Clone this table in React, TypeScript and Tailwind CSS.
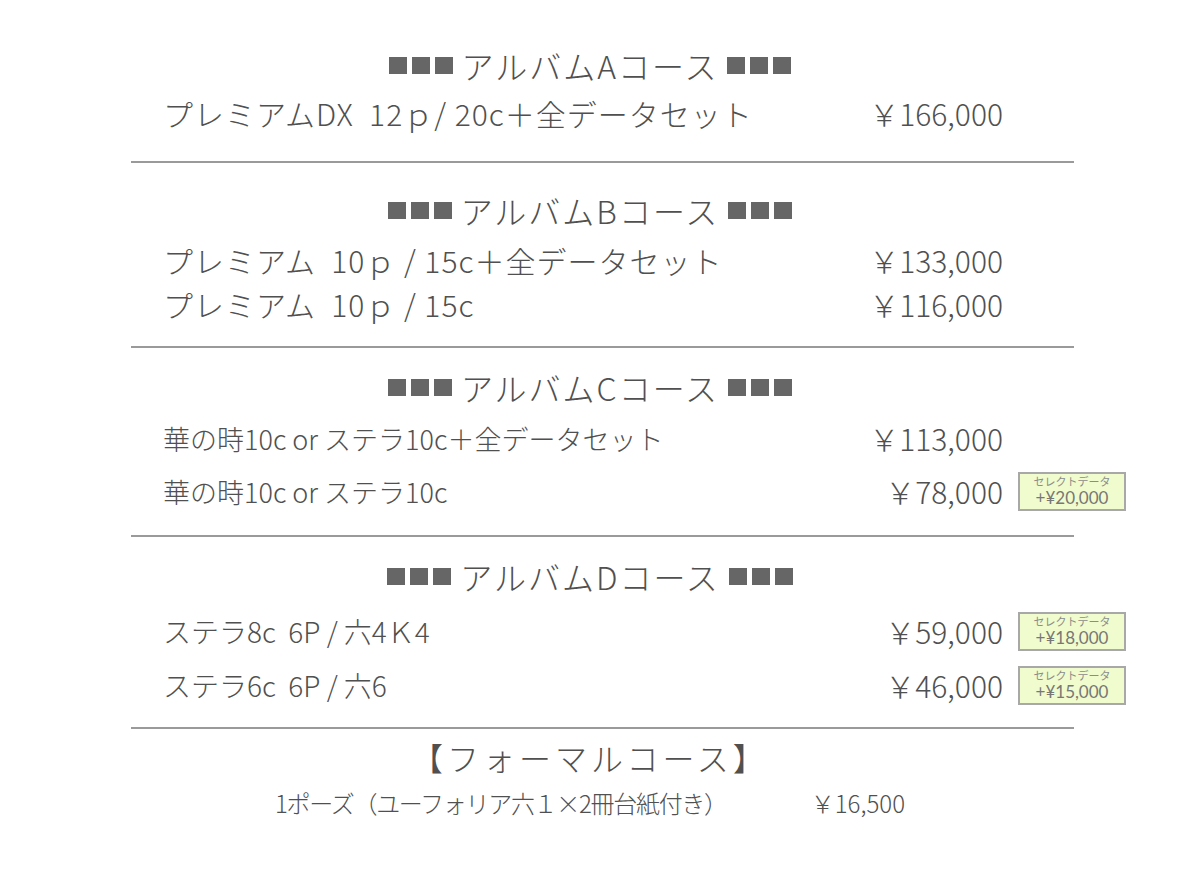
import React from 'react'

const jp = "font-['Noto_Sans_CJK_JP',sans-serif]"

function Squares() {
  return (
    <div className="flex gap-[5px]">
      {[0, 1, 2].map(i => (
        <span key={i} className="block w-[18px] h-[17px] bg-[#666]" />
      ))}
    </div>
  )
}

function Heading({ label, mt }: { label: string; mt: string }) {
  return (
    <div className={`${mt} h-[40px] w-[943px] pr-[25px] flex items-center justify-center gap-[9px]`}>
      <Squares />
      <span className="text-[32px] tracking-[2px] leading-none text-[#505050]">{label}</span>
      <Squares />
    </div>
  )
}

// select-data add-on tag next to the price
function Badge({ amount }: { amount: string }) {
  return (
    <div className="ml-[15px] w-[108px] h-[39px] border-2 border-[#a8a8a8] bg-[#f0fccd] flex flex-col items-center justify-center font-['Lato','Noto_Sans_CJK_JP',sans-serif] font-normal">
      <span className="text-[11px] leading-[13px] text-[#8c8c8c]">セレクトデータ</span>
      <span className="text-[17px] leading-[19px] text-[#777]">{amount}</span>
    </div>
  )
}

function Row({ text, price, size, mt, badge }: {
  text: string
  price: string
  size: string
  mt: string
  badge?: string
}) {
  return (
    <div className={`${mt} h-[44px] pl-[32px] flex items-center`}>
      <div className="w-[840px] flex items-center justify-between text-[#505050]">
        <span className={`${size} leading-none whitespace-pre`}>{text}</span>
        <span className="text-[30px] leading-none">{price}</span>
      </div>
      {badge && <Badge amount={badge} />}
    </div>
  )
}

function Divider({ mt }: { mt: string }) {
  return <div className={`${mt} w-[943px] h-[2px] bg-[#9a9a9a]`} />
}

export default function App() {
  return (
    <div className={`${jp} font-light w-[1200px] h-[886px] bg-white pt-[45px]`}>
      <div className="ml-[131px] w-[995px] flex flex-col">
        <Heading label="アルバムAコース" mt="mt-0" />
        <Row
          mt="mt-[6px]"
          size="text-[30px] tracking-[1px]"
          text="プレミアムDX  12ｐ/ 20c＋全データセット"
          price="￥166,000"
        />
        <Divider mt="mt-[26px]" />

        <Heading label="アルバムBコース" mt="mt-[27px]" />
        <Row
          mt="mt-[8px]"
          size="text-[30px] tracking-[1px]"
          text="プレミアム  10ｐ / 15c＋全データセット"
          price="￥133,000"
        />
        <Row
          mt="mt-0"
          size="text-[30px] tracking-[1px]"
          text="プレミアム  10ｐ / 15c"
          price="￥116,000"
        />
        <Divider mt="mt-[20px]" />

        <Heading label="アルバムCコース" mt="mt-[19px]" />
        <Row
          mt="mt-[9px]"
          size="text-[27px]"
          text="華の時10c or ステラ10c＋全データセット"
          price="￥113,000"
        />
        <Row
          mt="mt-[9px]"
          size="text-[27px]"
          text="華の時10c or ステラ10c"
          price="￥78,000"
          badge="+¥20,000"
        />
        <Divider mt="mt-[22px]" />

        <Heading label="アルバムDコース" mt="mt-[19px]" />
        <Row
          mt="mt-[13px]"
          size="text-[28px]"
          text="ステラ8c  6P / 六4Ｋ4"
          price="￥59,000"
          badge="+¥18,000"
        />
        <Row
          mt="mt-[10px]"
          size="text-[28px]"
          text="ステラ6c  6P / 六6"
          price="￥46,000"
          badge="+¥15,000"
        />
        <Divider mt="mt-[20px]" />

        <div className="mt-[10px] h-[36px] w-[943px] pr-[25px] flex items-center justify-center">
          <span className="text-[32px] tracking-[4px] leading-none text-[#505050]">【フォーマルコース】</span>
        </div>
        <div className="mt-[10px] h-[36px] w-[943px] pr-[25px] flex items-center justify-center gap-[84px] text-[#505050]">
          <span className="text-[24px] tracking-[-1.3px] leading-none">1ポーズ（ユーフォリア六１×2冊台紙付き）</span>
          <span className="text-[24px] leading-none">￥16,500</span>
        </div>
      </div>
    </div>
  )
}
